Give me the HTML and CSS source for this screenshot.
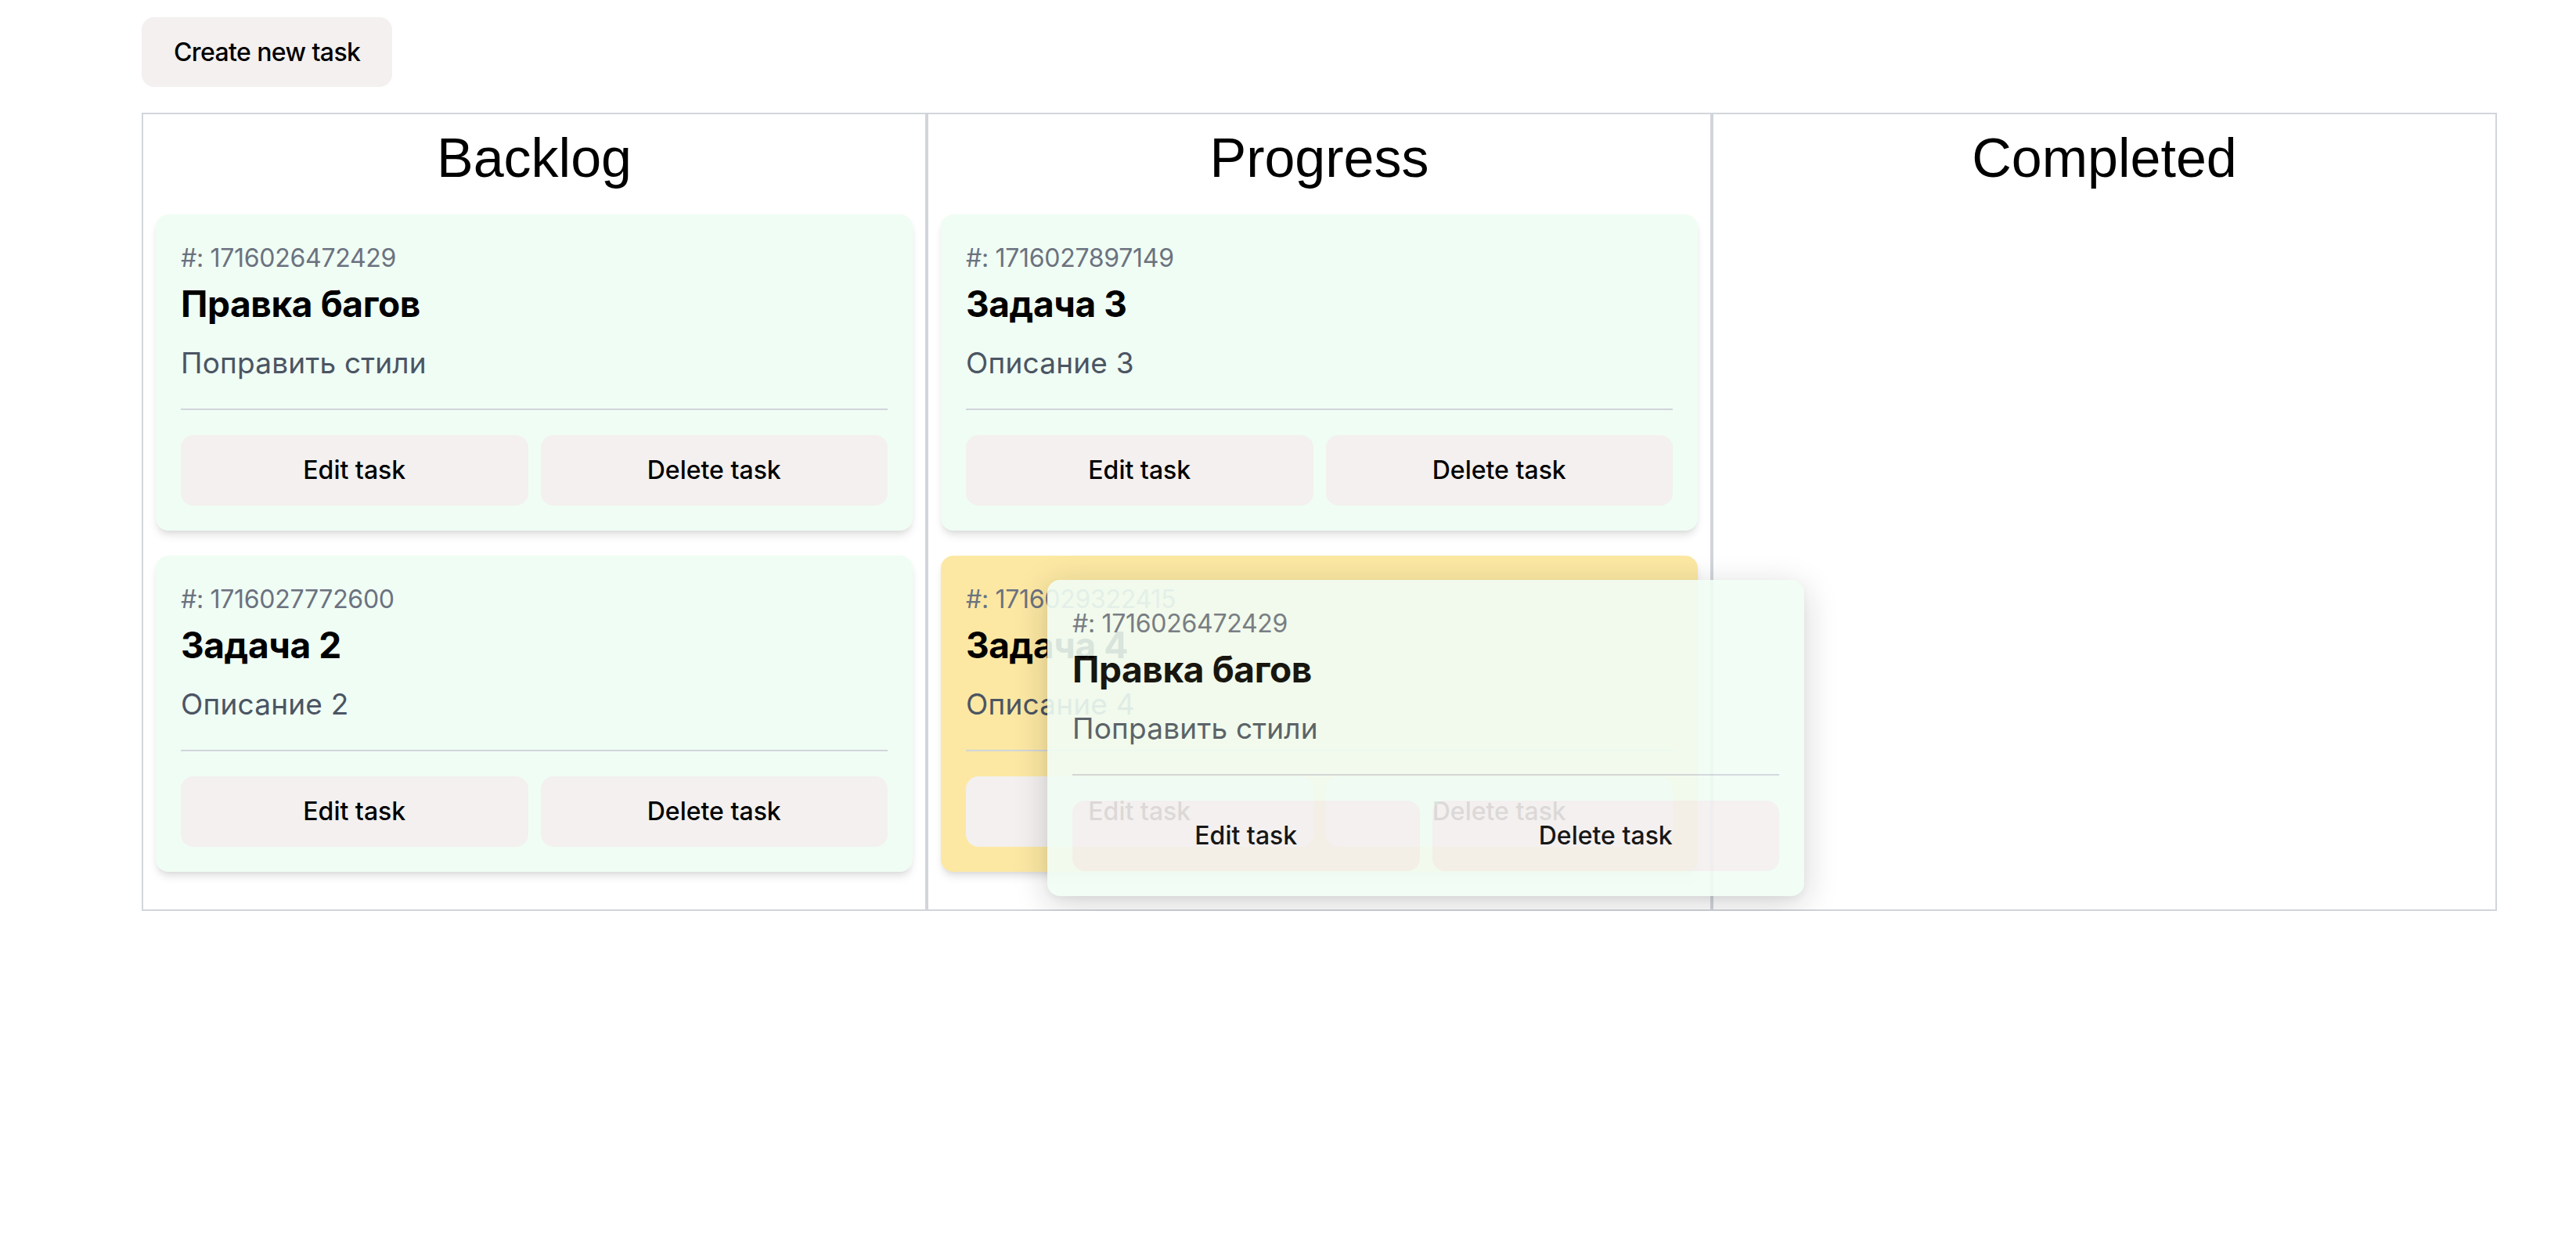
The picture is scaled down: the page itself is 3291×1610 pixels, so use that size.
FILE: index.html
```html
<!DOCTYPE html>
<html lang="ru">
<head>
<meta charset="utf-8">
<title>Tasks board</title>
<link rel="stylesheet" href="styles.css">
</head>
<body>
<div class="page">
  <button class="btn btn-create" type="button">Create new task</button>

  <div class="board">
    <section class="column">
      <h2 class="column-title">Backlog</h2>
      <article class="card">
        <div class="card-id">#: 1716026472429</div>
        <h3 class="card-title">Правка багов</h3>
        <p class="card-desc">Поправить стили</p>
        <hr class="card-divider">
        <div class="card-actions">
          <button class="btn" type="button">Edit task</button>
          <button class="btn" type="button">Delete task</button>
        </div>
      </article>
      <article class="card">
        <div class="card-id">#: 1716027772600</div>
        <h3 class="card-title">Задача 2</h3>
        <p class="card-desc">Описание 2</p>
        <hr class="card-divider">
        <div class="card-actions">
          <button class="btn" type="button">Edit task</button>
          <button class="btn" type="button">Delete task</button>
        </div>
      </article>
    </section>

    <section class="column">
      <h2 class="column-title">Progress</h2>
      <article class="card">
        <div class="card-id">#: 1716027897149</div>
        <h3 class="card-title">Задача 3</h3>
        <p class="card-desc">Описание 3</p>
        <hr class="card-divider">
        <div class="card-actions">
          <button class="btn" type="button">Edit task</button>
          <button class="btn" type="button">Delete task</button>
        </div>
      </article>
      <article class="card card-over">
        <div class="card-id">#: 1716029322415</div>
        <h3 class="card-title">Задача 4</h3>
        <p class="card-desc">Описание 4</p>
        <hr class="card-divider">
        <div class="card-actions">
          <button class="btn" type="button">Edit task</button>
          <button class="btn" type="button">Delete task</button>
        </div>
      </article>
    </section>

    <section class="column">
      <h2 class="column-title">Completed</h2>
    </section>
  </div>

  <article class="card card-ghost">
    <div class="card-id">#: 1716026472429</div>
    <h3 class="card-title">Правка багов</h3>
    <p class="card-desc">Поправить стили</p>
    <hr class="card-divider">
    <div class="card-actions">
      <button class="btn" type="button">Edit task</button>
      <button class="btn" type="button">Delete task</button>
    </div>
  </article>
</div>
</body>
</html>
```

FILE: styles.css
```css
* {
  box-sizing: border-box;
}

html, body {
  margin: 0;
  padding: 0;
  background: #ffffff;
}

body {
  font-family: Inter, "Noto Sans", sans-serif;
  color: #000000;
}

.page {
  position: relative;
  padding: 22px 0 0 181px;
}

.btn {
  display: block;
  border: none;
  margin: 0;
  background: #f3f0ef;
  border-radius: 16px;
  font-family: Inter, "Noto Sans", sans-serif;
  font-size: 32px;
  font-weight: 500;
  line-height: 48px;
  padding: 21px 0;
  color: #000000;
  text-align: center;
}

.btn-create {
  padding: 20px 41px;
  line-height: 49px;
  letter-spacing: -0.6px;
}

.board {
  display: flex;
  width: 3009px;
  margin-top: 33px;
}

.column {
  flex: 1 1 0;
  border: 2px solid #d1d5db;
  padding: 16px;
}

.column-title {
  margin: 0 0 32px;
  font-family: "Liberation Sans", Arial, sans-serif;
  font-weight: 400;
  font-size: 70px;
  line-height: 80px;
  text-align: center;
  color: #000000;
}

.card {
  background: #f0fdf4;
  border-radius: 16px;
  padding: 32px;
  margin-bottom: 32px;
  box-shadow: 0 8px 12px -2px rgba(0, 0, 0, 0.1), 0 4px 8px -4px rgba(0, 0, 0, 0.1);
}

.card-over {
  background: #fce8a3;
}

.card-id {
  font-size: 32px;
  line-height: 48px;
  letter-spacing: -0.3px;
  color: #6b7280;
}

.card-title {
  margin: 2px 0 0;
  font-size: 46px;
  line-height: 64px;
  font-weight: 700;
  letter-spacing: -0.4px;
  color: #000000;
}

.card-desc {
  margin: 16px 0 0;
  font-size: 37px;
  line-height: 56px;
  letter-spacing: 0.2px;
  color: #4b5563;
}

.card-divider {
  border: none;
  border-top: 2px solid #d1d5db;
  height: 0;
  margin: 30px 0 32px;
}

.card-actions {
  display: grid;
  grid-template-columns: 1fr 1fr;
  gap: 16px;
}

.card-ghost {
  position: absolute;
  left: 1338px;
  top: 741px;
  width: 967px;
  margin: 0;
  opacity: 0.9;
  box-shadow: 0 10px 44px rgba(0, 0, 0, 0.18), 0 4px 10px rgba(0, 0, 0, 0.05);
}
```
